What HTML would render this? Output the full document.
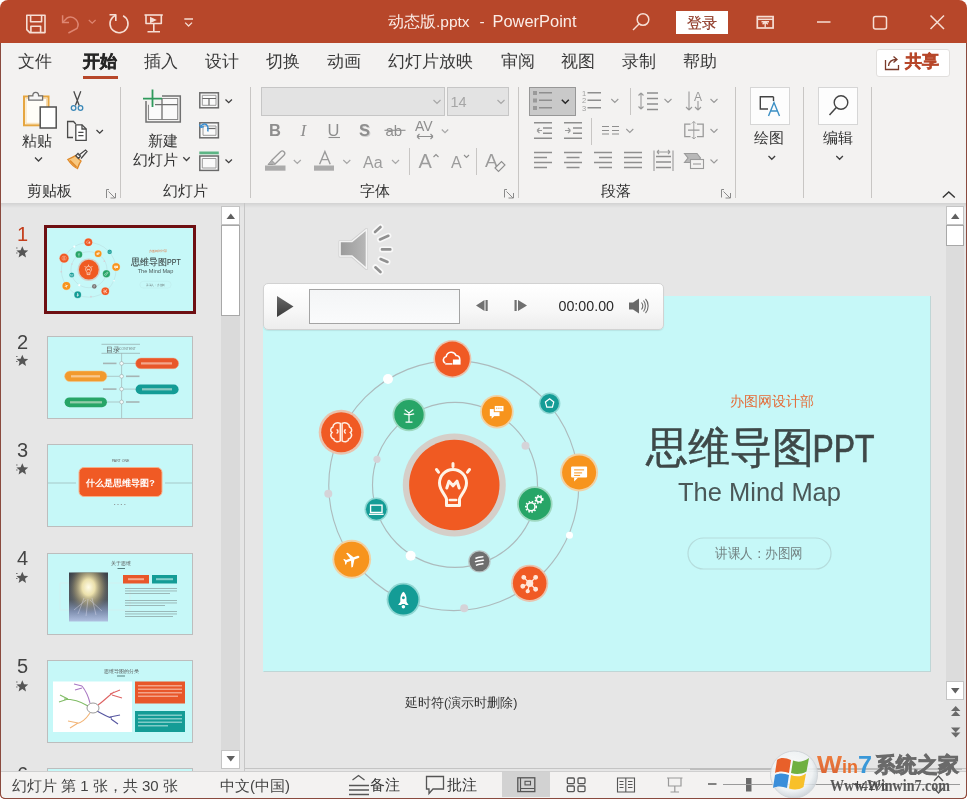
<!DOCTYPE html>
<html><head><meta charset="utf-8">
<style>
*{margin:0;padding:0;box-sizing:border-box}
html,body{width:967px;height:799px;overflow:hidden;background:#fff}
body{font-family:"Liberation Sans",sans-serif;position:relative;color:#262626}
.a{position:absolute}
.t{position:absolute;white-space:nowrap;line-height:1;will-change:transform}
svg{position:absolute;overflow:visible;will-change:transform}
</style></head><body>
<!-- window frame -->
<div class="a" id="win" style="left:0;top:0;width:967px;height:799px;background:#B7472A;border-radius:8px 8px 5px 5px"></div>
<!-- title bar region is the frame bg -->
<!-- tabs + ribbon -->
<div class="a" style="left:1px;top:43px;width:965px;height:160px;background:#F3F2F1"></div>
<!-- ribbon shadow -->
<div class="a" style="left:1px;top:203px;width:965px;height:5px;background:linear-gradient(#D2D2D2,#E6E6E6)"></div>
<!-- main body -->
<div class="a" style="left:1px;top:208px;width:965px;height:563px;background:#E6E6E6"></div>
<!-- status bar -->



<!-- TITLE BAR -->
<svg style="left:0;top:0" width="967" height="43">
 <g fill="none" stroke="#F6DED4" stroke-width="1.6" stroke-linejoin="round">
  <!-- save -->
  <path d="M26.8 15.2 H45 V32.6 H29.8 L26.8 29.6 Z"/>
  <path d="M30.6 15.2 V21.8 H41.6 V15.2"/>
  <path d="M30.9 32.6 V26.3 H40.6 V32.6"/>
  <!-- redo circle -->
  <path d="M123.1 15.7 A9 9 0 1 1 112.6 17.4 L115.8 14.8"/>
  <path d="M109.5 14.8 H115.8 V21"/>
  <!-- present -->
  <path d="M144.5 15 H162.8"/>
  <path d="M146 15 V23.5 H161.3 V15"/>
  <path d="M153.8 23.5 V31.6 M147.5 31.8 H160"/>
  <!-- customize -->
  <path d="M184.3 19 H193 M185.2 22.6 L188.6 26 L192 22.6" stroke-width="1.3"/>
 </g>
 <path d="M150 16.8 L156.8 20 L150 23.2 Z" fill="#F6DED4"/>
 <g fill="none" stroke="#DE8672" stroke-width="1.5">
  <!-- undo (disabled) -->
  <path d="M62.6 15.2 V22.5 H69"/>
  <path d="M62.6 22.5 L67 18 A7.6 7.6 0 0 1 77 28.5 L68.4 33"/>
  <path d="M88.8 20 L92.2 23.2 L95.6 20" stroke-width="1.2"/>
 </g>
 <text x="388" y="26.5" font-family="Liberation Sans" font-size="15.5" fill="#FBEDE7">动态版.pptx</text><text x="479.5" y="26.5" font-family="Liberation Sans" font-size="15.5" fill="#FBEDE7">-</text><text x="492.5" y="26.5" font-family="Liberation Sans" font-size="16" textLength="84" lengthAdjust="spacingAndGlyphs" fill="#FBEDE7">PowerPoint</text>
 <!-- search -->
 <g fill="none" stroke="#F6DED4" stroke-width="1.5">
  <circle cx="643" cy="19.5" r="5.8"/>
  <path d="M639 24 L633 30"/>
 </g>
 <rect x="676" y="11" width="52" height="23" fill="#FFFFFF"/>
 <text x="686.5" y="27.5" font-size="15" fill="#8E3826" stroke="#8E3826" stroke-width="0.2" font-family="Liberation Sans">登录</text>
 <!-- ribbon display options -->
 <g fill="none" stroke="#F6DED4" stroke-width="1.5">
  <rect x="757.3" y="16.6" width="15.8" height="11.4" stroke-width="1.7"/>
  <path d="M757.5 19.3 H773" stroke-width="1.5"/>
  <path d="M765.2 27.5 V21.8 M761.5 21.8 H769 M762.6 24.2 L765.2 21.8 L767.8 24.2" stroke-width="1.4"/>
  <!-- min -->
  <path d="M817 22 H830.5"/>
  <!-- max -->
  <rect x="873.5" y="16.5" width="13" height="12.5" rx="2"/>
  <!-- close -->
  <path d="M930.5 15.5 L944 29 M944 15.5 L930.5 29"/>
 </g>
</svg>
<!-- TABS -->
<div class="t" style="left:18px;top:53px;font-size:17px;color:#3A3A3A">文件</div>
<div class="t" style="left:83px;top:53px;font-size:17px;color:#262626;font-weight:bold;-webkit-text-stroke:0.5px #262626">开始</div>
<div class="a" style="left:83px;top:76px;width:35px;height:3px;background:#B7472A"></div>
<div class="t" style="left:144px;top:53px;font-size:17px;color:#3A3A3A">插入</div>
<div class="t" style="left:205px;top:53px;font-size:17px;color:#3A3A3A">设计</div>
<div class="t" style="left:266px;top:53px;font-size:17px;color:#3A3A3A">切换</div>
<div class="t" style="left:327px;top:53px;font-size:17px;color:#3A3A3A">动画</div>
<div class="t" style="left:388px;top:53px;font-size:17px;color:#3A3A3A">幻灯片放映</div>
<div class="t" style="left:501px;top:53px;font-size:17px;color:#3A3A3A">审阅</div>
<div class="t" style="left:561px;top:53px;font-size:17px;color:#3A3A3A">视图</div>
<div class="t" style="left:622px;top:53px;font-size:17px;color:#3A3A3A">录制</div>
<div class="t" style="left:683px;top:53px;font-size:17px;color:#3A3A3A">帮助</div>
<!-- share -->
<div class="a" style="left:876px;top:49px;width:74px;height:28px;background:#FFFFFF;border:1px solid #E1DFDD;border-radius:3px"></div>
<svg style="left:0;top:0" width="967" height="100">
 <g fill="none" stroke="#7A3A2A" stroke-width="1.3">
  <path d="M885.5 60 V69.5 H898.5 V65"/>
  <path d="M888.5 66 C889 61 892 59.5 896.5 59.5 M893.5 56.5 L897 59.5 L893.5 62.5"/>
 </g>
</svg>
<div class="t" style="left:905px;top:53px;font-size:17px;color:#B7472A;font-weight:bold;-webkit-text-stroke:0.5px #B7472A">共享</div>

<!-- RIBBON -->
<svg style="left:0;top:0" width="967" height="205">
 <!-- group separators -->
 <g stroke="#C8C6C4" stroke-width="1">
  <path d="M120.5 87 V198 M250.5 87 V198 M518.5 87 V198 M735.5 87 V198 M803.5 87 V198 M871.5 87 V198"/>
  <path d="M409.5 148 V175 M476.5 148 V175 M630.5 88 V115 M591.5 118 V145"/>
 </g>
 <!-- PASTE -->
 <rect x="24" y="96.5" width="24.5" height="28.8" fill="#FFFDF8" stroke="#E6A640" stroke-width="2"/>
 <rect x="26" y="98.5" width="20.5" height="24.8" fill="none" stroke="#F8DDB0" stroke-width="1"/>
 <path d="M28.7 95.8 H32.8 C32.8 93.6 34 92.3 35.7 92.3 C37.4 92.3 38.6 93.6 38.6 95.8 H42.6 V100.2 H28.7 Z" fill="#F6F6F6" stroke="#707070" stroke-width="1.3"/>
 <rect x="40.2" y="107" width="16" height="21" fill="#FFFFFF" stroke="#505050" stroke-width="1.5"/>
 <!-- scissors -->
 <g fill="none" stroke-width="1.3">
  <path d="M73.8 91.2 L79.2 105.5 M80.8 91.2 L75.4 105.5" stroke="#4A4A4A"/>
  <circle cx="73.6" cy="108" r="2.3" stroke="#3B88B8"/>
  <circle cx="80.5" cy="108" r="2.3" stroke="#3B88B8"/>
 </g>
 <!-- copy -->
 <g fill="none" stroke="#4A4A4A" stroke-width="1.3">
  <path d="M73 137.5 H67.6 V121.5 H73.5 L75.8 124"/>
  <path d="M75.8 124.8 H82 L86.2 129 V140.3 H75.8 Z" fill="#FFFFFF"/>
  <path d="M82 124.8 V129 H86.2"/>
  <path d="M78.3 132.3 H83.5 M78.3 135.6 H83.5"/>
  <path d="M96.5 130 L99.7 133.2 L102.9 130" stroke="#404040"/>
 </g>
 <!-- format painter -->
 <path d="M67.8 159.5 C71 158 73.5 157 75.5 155.5 L81 161 C79.5 163 78.5 165.5 77.5 168.5 C74 167 70.5 163.5 67.8 159.5 Z" fill="#F8C880" stroke="#E08A2A" stroke-width="1.3"/>
 <path d="M70 160.5 L76.5 167" stroke="#E08A2A" stroke-width="1.6"/>
 <path d="M75.8 155.8 L78 153.5 L80.5 156 L78.5 158.5 Z M78.5 155.5 L85.5 150 L87 151.5 L81 158.5" fill="#FFFFFF" stroke="#4A4A4A" stroke-width="1.3"/>
 <!-- paste chevron -->
 <path d="M35 157.5 L38.5 161 L42 157.5" fill="none" stroke="#404040" stroke-width="1.3"/>
 <!-- launchers -->
 <g fill="none" stroke="#8A8A8A" stroke-width="1">
  <path d="M106.5 198 V189.5 H109 M108.5 191.5 L115 198 M110.5 198 H115.5 V193"/>
  <path d="M504.5 197.5 V189.5 H507 M506.5 191.5 L513 198 M508.5 198 H513.5 V193"/>
  <path d="M721.5 197.5 V189.5 H724 M723.5 191.5 L730 198 M725.5 198 H730.5 V193"/>
 </g>
 <!-- NEW SLIDE -->
 <path d="M148.5 104.7 V119.5 H177.7 V98.5 H162 V104.7 Z" fill="#FAFAFA"/>
 <g fill="none" stroke="#707070" stroke-width="1.5">
  <path d="M146 101 V122 H180.3 V96 H162"/>
  <path d="M148.5 104.7 V119.5 H177.7 V98.5 H162" stroke="#8A8A8A" stroke-width="1.1"/>
  <path d="M162 98.5 V119.5 M155 104.7 H177.7" stroke-width="1.3"/>
 </g>
 <path d="M143 98.7 H162 M152.5 89.5 V107" stroke="#2F9A5C" stroke-width="1.8" fill="none"/>
 <!-- layout -->
 <g fill="none" stroke="#6A6A6A" stroke-width="1.5">
  <rect x="199.8" y="92.8" width="18.6" height="15" fill="#FAFAFA"/>
  <path d="M202.3 95.3 H216 V105.3 H202.3 Z" stroke="#9A9A9A" stroke-width="1"/>
  <path d="M202.3 98.5 H216 M209 98.5 V105.3" stroke-width="1.2"/>
  <path d="M225.5 99.5 L228.7 102.7 L231.9 99.5" stroke="#404040" stroke-width="1.3"/>
  <!-- reset -->
  <rect x="199.8" y="122.8" width="18.6" height="15" fill="#FAFAFA"/>
  <path d="M203 126 H216 V135.3 H203 Z" stroke="#9A9A9A" stroke-width="1"/>
  <path d="M207 128.5 H215.5" stroke-width="1.2"/>
  <!-- section -->
  <rect x="199.8" y="156" width="18.6" height="14.4" fill="#FAFAFA"/>
  <path d="M202.3 158.5 H216 V168 H202.3 Z" stroke="#9A9A9A" stroke-width="1"/>
  <path d="M225.5 159.5 L228.7 162.7 L231.9 159.5" stroke="#404040" stroke-width="1.3"/>
  <path d="M183.3 157.3 L186.5 160.5 L189.7 157.3" stroke="#404040" stroke-width="1.3"/>
 </g>
 <rect x="199.3" y="151.5" width="19.5" height="2.8" fill="#5DB585"/>
 <path d="M200.8 126.8 C202 123.5 206 123 207.5 126 C208.3 127.5 208.3 129.5 207.8 131.5" fill="none" stroke="#3A8ED0" stroke-width="1.5"/>
 <path d="M199.5 124.5 L200.8 127.5 L203.8 126.5" fill="none" stroke="#3A8ED0" stroke-width="1.4"/>
 <!-- FONT GROUP -->
 <rect x="261.5" y="87.5" width="183" height="28" fill="#E3E3E3" stroke="#C6C6C6"/>
 <rect x="447.5" y="87.5" width="61" height="28" fill="#E3E3E3" stroke="#C6C6C6"/>
 <g fill="none" stroke="#A8A8A8" stroke-width="1.2">
  <path d="M433.5 100 L437 103.5 L440.5 100 M497.5 100 L501 103.5 L504.5 100"/>
  <path d="M441.8 129.5 L445 132.7 L448.2 129.5"/>
  <path d="M293.8 160 L297.3 163.5 L300.8 160 M343.3 160 L346.8 163.5 L350.3 160 M392 160 L395.5 163.5 L399 160"/>
 </g>
 <text x="450.5" y="107" font-size="14.5" fill="#A6A6A6" font-family="Liberation Sans">14</text>
 <g font-family="Liberation Sans" fill="#8E8E8E">
  <text x="269" y="135.8" font-size="16.5" font-weight="bold">B</text>
  <text x="300.5" y="135.8" font-size="17" font-style="italic" font-family="Liberation Serif">I</text>
  <text x="327.5" y="135.8" font-size="16.5">U</text>
  <text x="360" y="136.8" font-size="16.5" font-weight="bold" fill="#D0D0D0">S</text>
  <text x="359" y="135.8" font-size="16.5" font-weight="bold" fill="#8E8E8E">S</text>
  <text x="385.5" y="135.5" font-size="15">ab</text>
  <text x="415" y="131" font-size="14">AV</text>
  <text x="363" y="167.5" font-size="16" fill="#9C9C9C">Aa</text>
  <text x="418.5" y="167.5" font-size="20" fill="#9C9C9C">A</text>
  <text x="451" y="167.5" font-size="16" fill="#9C9C9C">A</text>
  <text x="485" y="167" font-size="19" fill="#9C9C9C">A</text>
 </g>
 <g fill="none" stroke="#8E8E8E" stroke-width="1.1">
  <path d="M328.5 137.5 H340"/>
  <path d="M384.5 130.3 H405.5"/>
  <path d="M417 136.5 H433 M417 136.5 L419.5 134 M417 136.5 L419.5 139 M433 136.5 L430.5 134 M433 136.5 L430.5 139"/>
  <path d="M433.5 157 L436 154.5 L438.5 157"/>
  <path d="M464 155 L466.5 157.5 L469 155"/>
  <path d="M495 168 L501.5 161.5 L505 165 L498.5 171.5 Z" fill="#F3F2F1"/>
 </g>
 <!-- highlighter -->
 <path d="M271.5 160.5 L280.5 151.8 C281.5 150.8 283 150.8 284 151.8 C285 152.8 285 154.3 284 155.3 L275 164 Z" fill="none" stroke="#9A9A9A" stroke-width="1.3"/><path d="M271.5 160.5 L268 164.5 H273.5 L275 164" fill="#B0B0B0" stroke="#9A9A9A" stroke-width="1"/>
 <rect x="265" y="165.5" width="20.5" height="5.2" fill="#ABABAB"/>
 <path d="M319.6 164.2 L324.9 151.5 L330.2 164.2 M321.6 159.6 H328.2" fill="none" stroke="#9A9A9A" stroke-width="1.4"/>
 <rect x="314" y="165.5" width="20" height="5.2" fill="#ABABAB"/>
 <!-- PARAGRAPH -->
 <rect x="529.5" y="87.5" width="46" height="28" fill="#C9C9C9" stroke="#979797"/>
 <g fill="#9A9A9A">
  <rect x="533" y="91" width="4" height="4"/><rect x="533" y="98.5" width="4" height="4"/><rect x="533" y="106" width="4" height="4"/>
 </g>
 <g fill="none" stroke="#8E8E8E" stroke-width="1.5">
  <path d="M539 92.8 H552 M539 100.3 H552 M539 107.8 H552"/>
  <path d="M587.5 92.8 H601 M587.5 100.3 H601 M587.5 107.8 H601"/>
  <path d="M647 93 H658 M647 98.5 H658 M647 104 H658 M647 109.5 H658"/>
  <!-- indents -->
  <path d="M534 122.8 H552 M543 128 H552 M543 133.2 H552 M534 138.3 H552"/>
  <path d="M564 122.8 H582 M573 128 H582 M573 133.2 H582 M564 138.3 H582"/>
  <!-- align -->
  <path d="M534 152.5 H552 M534 157.5 H547 M534 162.5 H552 M534 167.5 H547"/>
  <path d="M564 152.5 H582 M566.5 157.5 H579.5 M564 162.5 H582 M566.5 167.5 H579.5"/>
  <path d="M594 152.5 H612 M599 157.5 H612 M594 162.5 H612 M599 167.5 H612"/>
  <path d="M624 152.5 H642 M624 157.5 H642 M624 162.5 H642 M624 167.5 H642"/>
  <path d="M656 156.5 H671 M656 162 H671 M656 167.5 H671"/>
  <path d="M602 126.5 H609 M612 126.5 H619 M602 130.5 H609 M612 130.5 H619 M602 134 H609 M612 134 H619" stroke-width="1.2"/>
 </g>
 <g fill="none" stroke="#9A9A9A" stroke-width="1.1">
  <path d="M537 130.5 H542 M537 130.5 L539.5 128 M537 130.5 L539.5 133"/>
  <path d="M565 130.5 H570.5 M570.5 130.5 L568 128 M570.5 130.5 L568 133"/>
  <path d="M641 93 V109 M641 93 L638.5 95.5 M641 93 L643.5 95.5 M641 109 L638.5 106.5 M641 109 L643.5 106.5"/>
  <path d="M654 150.5 V171 M673 150.5 V171 M657 152 H670 M657 152 L659 150 M657 152 L659 154 M670 152 L668 150 M670 152 L668 154"/>
  <path d="M689 91.5 V110 M689 110 L686 107 M689 110 L692 107 M698 101 V110 M698 110 L695 107 M698 110 L701 107"/>
  <path d="M690.5 124.2 H684.8 V136.6 H690.5 M697 124.2 H703.2 V136.6 H697 M688 130.2 H699.5" stroke-width="1.3"/><path d="M693.8 121.5 V139 M691.8 123.5 L693.8 121.5 L695.8 123.5 M691.8 137 L693.8 139 L695.8 137" stroke-width="0.9"/>
  <path d="M684.5 153.5 H697 L700.5 158 L697 162.5 H684.5 L688 158 Z" fill="#B8B8B8"/>
  <rect x="690.5" y="159.5" width="13" height="9" fill="#F3F2F1"/>
  <path d="M693 164 H701"/>
  <path d="M611.3 99 L614.8 102.5 L618.3 99 M664.5 99 L668 102.5 L671.5 99 M710.5 99 L714 102.5 L717.5 99"/>
  <path d="M626.3 129 L629.8 132.5 L633.3 129 M710.5 129 L714 132.5 L717.5 129 M710.5 159.5 L714 163 L717.5 159.5"/>
 </g>
 <text x="694" y="101" font-size="12" fill="#9A9A9A" font-family="Liberation Sans">A</text>
 <g font-family="Liberation Sans" font-size="7.5" fill="#A0A0A0">
  <text x="582" y="95.5">1</text><text x="582" y="103">2</text><text x="582" y="110.5">3</text>
 </g>
 <path d="M561.8 99.8 L565.3 103.3 L568.8 99.8" fill="none" stroke="#262626" stroke-width="1.5"/>
 <!-- DRAWING / EDITING -->
 <rect x="750.5" y="87.5" width="39" height="37" fill="#FDFDFD" stroke="#D6D6D6"/>
 <rect x="818.5" y="87.5" width="39" height="37" fill="#FDFDFD" stroke="#D6D6D6"/>
 <path d="M773.5 96.8 H760.3 V109 H768" fill="none" stroke="#444" stroke-width="1.4"/>
 <path d="M773.5 96.8 V101" fill="none" stroke="#444" stroke-width="1.4"/>
 <path d="M768.5 116 L774 102.5 L779.5 116 M770.5 111 H777.5" fill="none" stroke="#3B8FC4" stroke-width="1.4"/>
 <circle cx="841" cy="102.5" r="6.8" fill="none" stroke="#444" stroke-width="1.4"/>
 <path d="M836.3 107.5 L829.5 115" stroke="#444" stroke-width="1.5"/>
 <path d="M768.5 156 L771.8 159.3 L775.1 156 M836.3 156 L839.6 159.3 L842.9 156" fill="none" stroke="#404040" stroke-width="1.3"/>
 <path d="M942.8 197.5 L948.8 192 L954.8 197.5" fill="none" stroke="#333" stroke-width="1.4"/>
</svg>
<div class="t" style="left:22px;top:133px;font-size:15px;color:#333">粘贴</div>
<div class="t" style="left:27px;top:184px;font-size:14.5px;color:#333">剪贴板</div>
<div class="t" style="left:148px;top:133px;font-size:15px;color:#333">新建</div>
<div class="t" style="left:133px;top:152px;font-size:15px;color:#333">幻灯片</div>
<div class="t" style="left:163px;top:184px;font-size:14.5px;color:#333">幻灯片</div>
<div class="t" style="left:360px;top:184px;font-size:14.5px;color:#333">字体</div>
<div class="t" style="left:601px;top:184px;font-size:14.5px;color:#333">段落</div>
<div class="t" style="left:754px;top:130px;font-size:15px;color:#333">绘图</div>
<div class="t" style="left:823px;top:130px;font-size:15px;color:#333">编辑</div>

<!-- SLIDE PANEL -->
<svg width="0" height="0" style="position:absolute">
 <defs>
  <symbol id="s1" viewBox="0 0 668 376">
   <rect width="668" height="376" fill="#C6F8F8"/>
   <circle cx="190.75" cy="189.6" r="125" fill="none" stroke="#ADBBBD" stroke-width="1.15"/>
<circle cx="192" cy="188.9" r="82.5" fill="none" stroke="#ADBBBD" stroke-width="1.15"/>
<circle cx="125" cy="83" r="5" fill="#FFFFFF"/>
<circle cx="114" cy="163.3" r="3.6" fill="#D5D3D8"/>
<circle cx="65.3" cy="197.8" r="4" fill="#D5D3D8"/>
<circle cx="262.5" cy="149.8" r="4" fill="#D5D3D8"/>
<circle cx="147.7" cy="259.7" r="5" fill="#FFFFFF"/>
<circle cx="306.5" cy="239.3" r="3.5" fill="#FFFFFF"/>
<circle cx="201.2" cy="312.3" r="4" fill="#D5D3D8"/>
<circle cx="191.3" cy="189" r="51.5" fill="#D5CFC9"/><circle cx="191.3" cy="189" r="45.2" fill="#F05A22"/>
<g transform="translate(190,187)" fill="none" stroke="#FFF3E6" stroke-width="3" stroke-linecap="round" stroke-linejoin="round">
<path d="M-6.5 22.5 V16.5 C-6.5 12.5 -13.5 8 -13.5 0 A13.5 13.5 0 0 1 13.5 0 C13.5 8 6.5 12.5 6.5 16.5 V22.5 Z"/>
<path d="M-3.2 17 H3.2" stroke-width="2.6"/>
<path d="M0 -19.5 V-16.5 M-16.5 -13.5 L-14.5 -10.8 M16.5 -13.5 L14.5 -10.8"/>
<path d="M-6.2 5 L-4 -1.8 L0 2.8 L4 -1.8 L6.2 5" stroke-width="3"/>
</g>
<circle cx="189.4" cy="63" r="19" fill="#E9C3AE"/><circle cx="189.4" cy="63" r="17.4" fill="#F05A24"/>
<g transform="translate(189.4,63) scale(1.024)"><path d="M-7 4 A3.5 3.5 0 0 1 -6 -2.5 A5 5 0 0 1 3.5 -3.5 A3.5 3.5 0 0 1 7 1" fill="none" stroke="#FFF" stroke-width="1.5"/><rect x="0.5" y="0.5" width="7.5" height="5" fill="#FFF"/><path d="M-7 4.8 H0" stroke="#FFF" stroke-width="1.5"/></g>
<circle cx="78.2" cy="136.3" r="22.5" fill="#E9C3AE"/><circle cx="78.2" cy="136.3" r="20" fill="#F05A24"/>
<g transform="translate(78.2,136.5) scale(0.92)"><g fill="none" stroke="#FFEFE4" stroke-width="1.6"><path d="M-1 -10 C-5 -12 -9 -9 -9 -6 C-12 -5 -12 -1 -10 0 C-13 3 -10 7 -8 7 C-8 10 -4 11 -1 9 Z"/><path d="M1 -10 C5 -12 9 -9 9 -6 C12 -5 12 -1 10 0 C13 3 10 7 8 7 C8 10 4 11 1 9 Z"/><path d="M-5 -3 C-3 -3 -3 0 -5 1 M5 -3 C3 -3 3 0 5 1"/></g></g>
<circle cx="146" cy="118.8" r="16.5" fill="#9ED8C0"/><circle cx="146" cy="118.8" r="14.7" fill="#27A567"/>
<g transform="translate(146,118.8) scale(0.865)"><g fill="none" stroke="#FFF" stroke-width="1.4"><path d="M0 8 V-2 M-4 8.5 H4 M0 -2 L-5 -6 M0 -2 L5 -6 M0 0 L-6 -1 M0 0 L6 -1"/></g></g>
<circle cx="233.9" cy="115.7" r="16.8" fill="#F0D2A6"/><circle cx="233.9" cy="115.7" r="15" fill="#F7941D"/>
<g transform="translate(233.9,115.7) scale(0.882)"><rect x="-8" y="-3" width="11" height="8" fill="#FFF"/><path d="M-6 5 L-6 8 L-3 5" fill="#FFF"/><rect x="-3" y="-7" width="11" height="7" fill="#FFF" stroke="#F7941D" stroke-width="1"/><path d="M-1 -4 H6" stroke="#F7941D" stroke-width="1" stroke-dasharray="1.5 1"/></g>
<circle cx="286.6" cy="107.4" r="10.8" fill="#8FD6D2"/><circle cx="286.6" cy="107.4" r="9.3" fill="#149C96"/>
<g transform="translate(286.6,107.4) scale(0.93)"><path d="M0 -5 L4.5 -1.5 L3 4 H-3 L-4.5 -1.5 Z" fill="none" stroke="#FFF" stroke-width="1.3"/></g>
<circle cx="316.1" cy="176.4" r="19" fill="#F0D2A6"/><circle cx="316.1" cy="176.4" r="17" fill="#F7941D"/>
<g transform="translate(316.1,176.4) scale(1.0)"><rect x="-8" y="-6" width="16" height="11" fill="#FFF" rx="1"/><path d="M-5 5 V9 L-1 5" fill="#FFF"/><path d="M-5 -2.5 H5 M-5 0.5 H3 M-5 3 H1" stroke="#F7941D" stroke-width="1"/></g>
<circle cx="271.8" cy="208" r="17.8" fill="#9ED8C0"/><circle cx="271.8" cy="208" r="16" fill="#27A567"/>
<g transform="translate(271.8,208) scale(0.941)"><g fill="none" stroke="#FFF" stroke-width="1.6"><circle cx="-4" cy="3" r="4.2"/><circle cx="4.5" cy="-5" r="2.8"/></g><g stroke="#FFF" stroke-width="1.6" stroke-dasharray="1.6 1.7"><circle cx="-4" cy="3" r="5.6" fill="none"/><circle cx="4.5" cy="-5" r="4" fill="none"/></g></g>
<circle cx="113.3" cy="213.3" r="11.8" fill="#8FD6D2"/><circle cx="113.3" cy="213.3" r="10.4" fill="#149C96"/>
<g transform="translate(113.3,213.3) scale(1.04)"><rect x="-5.5" y="-4" width="11" height="7" fill="none" stroke="#FFF" stroke-width="1.3"/><path d="M-7 4.8 H7" stroke="#FFF" stroke-width="1.3"/></g>
<circle cx="216.4" cy="265.4" r="11.2" fill="#B8C4C4"/><circle cx="216.4" cy="265.4" r="9.9" fill="#6E6E6E"/>
<g transform="translate(216.4,265.4) scale(0.99)"><g fill="none" stroke="#FFF" stroke-width="1.6"><path d="M-4 -3 C0 -5 3 -4 4 -5 M-4.5 0.5 C0 -1.5 3 -0.5 4.5 -1.5 M-3.5 4 C0 2 3 3 4 2"/></g></g>
<circle cx="88.75" cy="263.25" r="19.4" fill="#F0D2A6"/><circle cx="88.75" cy="263.25" r="17.5" fill="#F7941D"/>
<g transform="translate(88.75,263.25) scale(1.029)"><path transform="rotate(70) scale(0.78) translate(-11.5,-12)" d="M21 16v-2l-8-5V3.5c0-.83-.67-1.5-1.5-1.5S10 2.67 10 3.5V9l-8 5v2l8-2.5V19l-2 1.5V22l3.5-1 3.5 1v-1.5L13 19v-5.5l8 2.5z" fill="#FFF"/></g>
<circle cx="140.4" cy="303.6" r="16.8" fill="#8FD6D2"/><circle cx="140.4" cy="303.6" r="15" fill="#149C96"/>
<g transform="translate(140.4,303.6) scale(0.882)"><path d="M0 -9 C4 -6 4 0 3 5 H-3 C-4 0 -4 -6 0 -9 Z" fill="#FFF"/><path d="M-3 2 L-6 6 H-2 M3 2 L6 6 H2" fill="#FFF"/><circle cx="0" cy="-2" r="1.7" fill="#149C96"/><circle cx="0" cy="8" r="2" fill="#FFF"/></g>
<circle cx="266.7" cy="287.3" r="18.6" fill="#E9C3AE"/><circle cx="266.7" cy="287.3" r="16.8" fill="#F05A24"/>
<g transform="translate(266.7,287.3) scale(0.988)"><g stroke="#FFE6D9" stroke-width="1.3" fill="#FFE6D9"><path d="M0 0 L-6 -6 M0 0 L6 -6 M0 0 L-7 3 M0 0 L6 6 M0 0 L-2 8"/><circle r="3"/><circle cx="-6" cy="-6" r="1.8"/><circle cx="6" cy="-6" r="1.8"/><circle cx="-7" cy="3" r="1.8"/><circle cx="6" cy="6" r="1.8"/><circle cx="-2" cy="8" r="1.5"/></g></g>
   <text x="508.5" y="110" text-anchor="middle" font-size="14" fill="#E46C38" font-family="Liberation Sans">办图网设计部</text>
   <text x="382.5" y="166" font-size="41.5" fill="#3E4848" stroke="#3E4848" stroke-width="0.5" font-family="Liberation Sans">思维导图</text><text x="549.5" y="165.5" font-size="38" fill="#3E4848" stroke="#3E4848" stroke-width="0.7" font-family="Liberation Sans" textLength="62" lengthAdjust="spacingAndGlyphs">PPT</text>
   <text x="415" y="205.4" font-size="25.5" fill="#4A5858" font-family="Liberation Sans" textLength="163" lengthAdjust="spacingAndGlyphs">The Mind Map</text>
   <rect x="425" y="242" width="143" height="31" rx="15.5" fill="none" stroke="#B5DCDC" stroke-width="1.2"/>
   <text x="452" y="262" font-size="14" fill="#738383" font-family="Liberation Sans" textLength="88" lengthAdjust="spacingAndGlyphs">讲课人：办图网</text>
  </symbol>
 </defs>
</svg>
<div class="a" style="left:244px;top:203px;width:1px;height:568px;background:#C6C6C6"></div>
<!-- slide scrollbar -->
<div class="a" style="left:221px;top:206px;width:19px;height:562px;background:#DADADA"></div>
<div class="a" style="left:221px;top:206px;width:19px;height:19px;background:#FFF;border:1px solid #C4C4C4"></div>
<div class="a" style="left:221px;top:225px;width:19px;height:91px;background:#FFF;border:1px solid #A8A8A8"></div>
<div class="a" style="left:221px;top:750px;width:19px;height:19px;background:#FFF;border:1px solid #C4C4C4"></div>
<svg style="left:0;top:0" width="250" height="780"><path d="M226.5 219 L230.8 213.5 L235 219 Z" fill="#606060"/><path d="M226.5 756 L230.8 761.5 L235 756 Z" fill="#606060"/></svg>
<!-- numbers -->
<div class="t" style="left:17px;top:224px;font-size:20px;color:#C43E1C">1</div>
<div class="t" style="left:17px;top:332px;font-size:20px;color:#444">2</div>
<div class="t" style="left:17px;top:440px;font-size:20px;color:#444">3</div>
<div class="t" style="left:17px;top:548px;font-size:20px;color:#444">4</div>
<div class="t" style="left:17px;top:656px;font-size:20px;color:#444">5</div>
<div class="t" style="left:17px;top:764px;font-size:20px;color:#444">6</div>
<svg style="left:0;top:0" width="40" height="780">
 <g fill="#555">
  <g id="star"><path d="M22.3 246.2 L24 250.2 L28.2 250.5 L25 253.2 L26 257.4 L22.3 255.1 L18.6 257.4 L19.6 253.2 L16.4 250.5 L20.6 250.2 Z"/><rect x="16" y="247.5" width="1.6" height="1" fill="#777"/><rect x="16" y="252.5" width="1.6" height="1" fill="#777"/></g>
  <use href="#star" y="108.5"/><use href="#star" y="217"/><use href="#star" y="325.5"/><use href="#star" y="434"/>
 </g>
</svg>
<!-- thumbs -->
<div class="a" style="left:44px;top:225px;width:152px;height:89px;border:3px solid #6E0F12;background:#C6F8F8"></div>
<svg style="left:47px;top:228px" width="146" height="83"><use href="#s1" width="146" height="83"/></svg>

<!-- thumb 2 -->
<div class="a" style="left:47px;top:336px;width:146px;height:83px;background:#C6F8F8;border:1px solid #BDBDBD;overflow:hidden">
 <svg style="left:0;top:0" width="146" height="83">
  <path d="M53.5 7.3 H92 M53.5 16.3 H92" stroke="#8A9A9A" stroke-width="0.6"/>
  <text x="58" y="14.5" font-size="6.5" fill="#555" font-family="Liberation Sans">目录</text>
  <text x="71" y="12.5" font-size="3.5" fill="#7A8A8A" font-family="Liberation Sans">CONTENT</text>
  <path d="M73.6 16.3 V83" stroke="#9AA8A8" stroke-width="0.6"/>
  <path d="M75.5 26.4 H88 M59 39.3 H71.7 M75.5 52.1 H88 M59 65 H71.7" stroke="#9AA8A8" stroke-width="0.6"/>
  <g fill="#F4FCFC" stroke="#9AA8A8" stroke-width="0.6"><circle cx="73.6" cy="26.4" r="1.9"/><circle cx="73.6" cy="39.3" r="1.9"/><circle cx="73.6" cy="52.1" r="1.9"/><circle cx="73.6" cy="65" r="1.9"/></g>
  <rect x="87.6" y="21.1" width="43" height="10.6" rx="5.3" fill="#E8572A" stroke="#F2A27E" stroke-width="0.5"/>
  <rect x="16.6" y="34" width="42.3" height="10.6" rx="5.3" fill="#F29A2E" stroke="#F6C48A" stroke-width="0.5"/>
  <rect x="87.6" y="47.6" width="43" height="9.6" rx="4.8" fill="#149C96"/>
  <rect x="16.6" y="60.4" width="42.3" height="9.8" rx="4.9" fill="#27A567"/>
  <g fill="#FFF4EC" opacity="0.5"><rect x="93" y="25.3" width="31" height="2.2"/><rect x="23" y="38.2" width="29" height="2.2"/><rect x="94" y="51.2" width="30" height="2.2"/><rect x="22" y="64.2" width="32" height="2.2"/></g>
  <g fill="#A6B4B4"><rect x="55" y="25.6" width="13.5" height="1.6"/><rect x="78" y="38.5" width="13.5" height="1.6"/><rect x="55" y="51.3" width="13.5" height="1.6"/><rect x="78" y="64.2" width="13.5" height="1.6"/></g>
 </svg>
</div>
<!-- thumb 3 -->
<div class="a" style="left:47px;top:444px;width:146px;height:83px;background:#C6F8F8;border:1px solid #BDBDBD;overflow:hidden">
 <svg style="left:0;top:0" width="146" height="83">
  <path d="M0 38 H28 M117 38 H146" stroke="#9AB4B4" stroke-width="0.7"/>
  <rect x="31" y="22.5" width="83" height="29" rx="5" fill="#F05A24" stroke="#F6B08A" stroke-width="1"/>
  <text x="72.5" y="41" text-anchor="middle" font-size="9" font-weight="bold" fill="#FFF" font-family="Liberation Sans">什么是思维导图?</text>
  <text x="72.5" y="17" text-anchor="middle" font-size="3.5" fill="#666" font-family="Liberation Sans">PART ONE</text>
  <path d="M66 59.5 H79" stroke="#888" stroke-width="0.8" stroke-dasharray="1.2 2.2"/>
 </svg>
</div>
<!-- thumb 4 -->
<div class="a" style="left:47px;top:553px;width:146px;height:82px;background:#C6F8F8;border:1px solid #BDBDBD;overflow:hidden">
 <svg style="left:0;top:0" width="146" height="82">
  <defs>
   <linearGradient id="ph" x1="0" y1="0" x2="0" y2="1"><stop offset="0" stop-color="#3A4048"/><stop offset="0.55" stop-color="#505860"/><stop offset="0.8" stop-color="#8090B0"/><stop offset="1" stop-color="#B0C0E0"/></linearGradient>
   <radialGradient id="glow" cx="0.5" cy="0.3" r="0.55"><stop offset="0" stop-color="#FFFCE8"/><stop offset="0.3" stop-color="#F4E8B0" stop-opacity="0.95"/><stop offset="0.65" stop-color="#B8A878" stop-opacity="0.5"/><stop offset="1" stop-color="#606060" stop-opacity="0"/></radialGradient>
  </defs>
  <rect x="12" y="29" width="70" height="27" fill="none" stroke="#D8ECEC" stroke-width="0.6"/>
  <rect x="21" y="18.5" width="39" height="49" fill="url(#ph)"/>
  <rect x="21" y="18.5" width="39" height="49" fill="url(#glow)"/>
  <path d="M36 44 L30 60 M40 45 L38 62 M44 44 L48 61 M38 46 L26 56 M42 46 L54 57" stroke="#DDE" stroke-width="0.7" opacity="0.6"/>
  <text x="73" y="10.5" text-anchor="middle" font-size="5" fill="#555" font-family="Liberation Sans">关于思维</text>
  <path d="M69.5 14.5 H77" stroke="#3B6060" stroke-width="0.8"/>
  <rect x="75" y="21" width="26" height="8.5" fill="#E8572A"/><rect x="104" y="21" width="25" height="8.5" fill="#149C96"/>
  <g fill="#FFE0D0" opacity="0.6"><rect x="80" y="24.2" width="16" height="2"/></g><g fill="#D0F0EE" opacity="0.6"><rect x="108" y="24.2" width="17" height="2"/></g>
  <g fill="#8AA0A0" opacity="0.8"><rect x="77" y="34" width="52" height="0.9"/><rect x="77" y="36.5" width="52" height="0.9"/><rect x="77" y="39" width="45" height="0.9"/>
  <rect x="77" y="46" width="52" height="0.9"/><rect x="77" y="48.5" width="52" height="0.9"/><rect x="77" y="51" width="40" height="0.9"/>
  <rect x="77" y="57" width="52" height="0.9"/><rect x="77" y="59.5" width="52" height="0.9"/><rect x="77" y="62" width="48" height="0.9"/></g>
 </svg>
</div>
<!-- thumb 5 -->
<div class="a" style="left:47px;top:660px;width:146px;height:83px;background:#C6F8F8;border:1px solid #BDBDBD;overflow:hidden">
 <svg style="left:0;top:0" width="146" height="83">
  <text x="73" y="12" text-anchor="middle" font-size="5" fill="#555" font-family="Liberation Sans">思维导图的分类</text>
  <path d="M69 15 H77" stroke="#3B6060" stroke-width="0.8"/>
  <rect x="5" y="20.5" width="79" height="50.5" fill="#FFFFFF"/>
  <g fill="none" stroke-width="1.1" opacity="0.85">
   <path d="M40 45 C32 40 25 38 16 38 M20 38 L12 34 M20 38 L11 41" stroke="#6AB04A"/>
   <path d="M42 42 C40 34 38 30 34 25 M34 25 L26 23 M34 27 L27 29" stroke="#9A60B8"/>
   <path d="M50 44 C56 40 60 35 66 31 M62 33 L72 29 M64 34 L74 37" stroke="#D84848"/>
   <path d="M49 50 C55 53 58 56 64 57 M62 56 L72 54 M63 58 L70 63" stroke="#3A3A90"/>
   <path d="M42 52 C38 58 34 62 28 63 M30 62 L20 60 M30 62 L22 67" stroke="#F0A860"/>
  </g>
  <ellipse cx="45" cy="47" rx="6" ry="5" fill="#FFF" stroke="#555" stroke-width="0.6"/>
  <rect x="87" y="20.5" width="50" height="22" fill="#E8572A"/>
  <rect x="87" y="50" width="50" height="21" fill="#149C96"/>
  <g fill="#FBD8C8" opacity="0.6"><rect x="90" y="24" width="44" height="1.5"/><rect x="90" y="27.5" width="44" height="1.5"/><rect x="90" y="31" width="44" height="1.5"/><rect x="90" y="34.5" width="40" height="1.5"/></g>
  <g fill="#C8ECEA" opacity="0.6"><rect x="90" y="53.5" width="44" height="1.5"/><rect x="90" y="57" width="44" height="1.5"/><rect x="90" y="60.5" width="44" height="1.5"/><rect x="90" y="64" width="30" height="1.5"/></g>
 </svg>
</div>
<!-- thumb 6 -->
<div class="a" style="left:47px;top:768px;width:146px;height:10px;background:#C6F8F8;border:1px solid #BDBDBD"></div>


<!-- MAIN AREA -->
<div class="a" style="left:946px;top:206px;width:18px;height:493px;background:#DCDCDC"></div>
<div class="a" style="left:946px;top:206px;width:18px;height:19px;background:#FFF;border:1px solid #C4C4C4"></div>
<div class="a" style="left:946px;top:225px;width:18px;height:21px;background:#FFF;border:1px solid #A8A8A8"></div>
<div class="a" style="left:946px;top:681px;width:18px;height:19px;background:#FFF;border:1px solid #C4C4C4"></div>
<svg style="left:0;top:0" width="967" height="780">
 <path d="M951 219 L955.3 213.5 L959.5 219 Z M951 688 L955.3 693.5 L959.5 688 Z" fill="#606060"/>
 <path d="M951 711 L955.7 706 L960.4 711 Z M951 716 L955.7 711 L960.4 716 Z M951 727.5 L955.7 732.5 L960.4 727.5 Z M951 732.5 L955.7 737.5 L960.4 732.5 Z" fill="#6A6A6A"/>
</svg>
<svg style="left:263px;top:296px" width="668" height="376"><use href="#s1" width="668" height="376"/></svg>
<div class="a" style="left:263px;top:296px;width:668px;height:376px;border:1px solid #BFD6D6;border-top:0;border-left-color:#C6F8F8"></div>
<div class="t" style="left:405px;top:697px;font-size:12.5px;color:#333">延时符(演示时删除)</div>
<div class="a" style="left:245px;top:768px;width:721px;height:1px;background:#C4C4C4"></div>

<!-- speaker icon -->
<svg style="left:0;top:0" width="967" height="340">
 <defs>
  <linearGradient id="spk" x1="0" y1="0" x2="1" y2="0"><stop offset="0" stop-color="#9A9A9A"/><stop offset="1" stop-color="#B8B8B8"/></linearGradient>
  <filter id="sh" x="-20%" y="-20%" width="140%" height="140%"><feGaussianBlur stdDeviation="0.6"/></filter>
 </defs>
 <path d="M340 241.5 H352 L366.5 229.5 V268.5 L352 256 H340 Z" fill="#D0D0D0" stroke="#D0D0D0" stroke-width="3" stroke-linejoin="round" filter="url(#sh)"/>
 <path d="M340 241.5 H352 L366.5 229.5 V268.5 L352 256 H340 Z" fill="url(#spk)" stroke="#F4F4F4" stroke-width="1.6" stroke-linejoin="round"/>
 <g stroke-linecap="round">
  <g stroke="#F8F8F8" stroke-width="6">
   <path d="M375 232 L380.5 227 M380 239.5 L388.4 235.8 M382 249.4 H390.3 M380.6 259 L387.5 262 M375.4 267.3 L380.5 272"/>
  </g>
  <g stroke="#909090" stroke-width="2.6">
   <path d="M375 232 L380.5 227 M380 239.5 L388.4 235.8 M382 249.4 H390.3 M380.6 259 L387.5 262 M375.4 267.3 L380.5 272"/>
  </g>
 </g>
</svg>
<!-- media bar -->
<div class="a" style="left:263px;top:283px;width:401px;height:47px;border:1px solid #D2D2D2;border-radius:5px;background:linear-gradient(#FFFFFF,#F7F7F7 60%,#EDEDED);box-shadow:0 1px 1px rgba(0,0,0,0.08)"></div>
<div class="a" style="left:309px;top:289px;width:151px;height:35px;border:1px solid #A4A4A4;background:linear-gradient(#F4F5F6,#FAFBFC)"></div>
<svg style="left:0;top:0" width="967" height="340">
 <defs><linearGradient id="pl" x1="0" y1="0" x2="0" y2="1"><stop offset="0" stop-color="#6A6A6A"/><stop offset="1" stop-color="#3A3A3A"/></linearGradient></defs>
 <path d="M277 296 L293.5 306.5 L277 317 Z" fill="url(#pl)"/>
 <path d="M476 305.5 L484.5 300 V311 Z" fill="#707070"/><rect x="485.5" y="300" width="2.2" height="11" fill="#707070"/>
 <rect x="514.5" y="300" width="2.2" height="11" fill="#707070"/><path d="M518 300 L527 305.5 L518 311 Z" fill="#707070"/>
 <text x="558.5" y="311.2" font-size="14.2" fill="#2A2A2A" font-family="Liberation Sans" textLength="55.5" lengthAdjust="spacingAndGlyphs">00:00.00</text>
 <path d="M629 302.5 H633 L639 298.5 V313.5 L633 309.5 H629 Z" fill="#6A6A6A"/>
 <path d="M641.5 302.5 C643 304.5 643 307.5 641.5 309.5 M643.5 300.5 C646 303.5 646 308.5 643.5 311.5 M645.5 299 C649 302.5 649 309.5 645.5 313" fill="none" stroke="#6A6A6A" stroke-width="1.1"/>
</svg>

<!-- STATUS BAR -->
<div class="a" style="left:1px;top:771px;width:965px;height:27px;background:#F3F2F1;border-top:1px solid #CFCFCF;border-radius:0 0 4px 4px"></div>
<div class="t" style="left:12px;top:778px;font-size:15px;color:#444">幻灯片 第 1 张，共 30 张</div>
<div class="t" style="left:220px;top:778px;font-size:15px;color:#444">中文(中国)</div>
<div class="a" style="left:502px;top:772px;width:48px;height:25px;background:#D2D2D2"></div>
<div class="t" style="left:370px;top:777px;font-size:15px;color:#333">备注</div>
<div class="t" style="left:447px;top:777px;font-size:15px;color:#333">批注</div>
<svg style="left:0;top:0" width="967" height="799">
 <g fill="none" stroke="#555" stroke-width="1.3">
  <!-- notes -->
  <path d="M352.5 780 L358.5 775.5 L364.5 780"/>
  <path d="M349 785.5 H369 M349 790 H369 M349 794.5 H369"/>
  <!-- comments -->
  <path d="M426.5 776.5 H443.5 V789 H433 L429 793.5 V789 H426.5 Z"/>
  <!-- normal view -->
  <rect x="517.8" y="777.8" width="17" height="13.8"/>
  <path d="M520.5 778 V791.5 M520.5 788.5 H534.5" stroke-width="1.2"/>
  <rect x="525" y="781.3" width="5.5" height="3.6" stroke-width="1.1"/>
  <!-- sorter -->
  <rect x="567.3" y="778" width="7" height="5.6" rx="1"/><rect x="578" y="778" width="7" height="5.6" rx="1"/>
  <rect x="567.3" y="786" width="7" height="5.6" rx="1"/><rect x="578" y="786" width="7" height="5.6" rx="1"/>
  <!-- reading -->
  <path d="M617.5 778 H625.8 V792 H617.5 Z M625.8 778 H634.5 V792 H625.8 Z M619.5 781.5 H623.5 M619.5 784.5 H623.5 M619.5 787.5 H623.5 M628 781.5 H632.5 M628 784.5 H632.5 M628 787.5 H632.5" stroke-width="1.1"/>
 </g>
 <g fill="none" stroke="#9A9A9A" stroke-width="1.2">
  <path d="M667 778 H682.5 M668.5 778 V786 H681 V778 M674.8 786 V791.5 M670.5 792 H679"/>
 </g>
 <path d="M708 784 H716.5" stroke="#444" stroke-width="1.3"/>
 <rect x="746" y="778" width="5.5" height="13.5" fill="#6A6A6A"/>
</svg>
<!-- watermark -->
<svg style="left:0;top:0" width="967" height="799">
 <defs>
  <radialGradient id="wg" cx="0.45" cy="0.4" r="0.6"><stop offset="0" stop-color="#FFFFFF" stop-opacity="0.9"/><stop offset="0.75" stop-color="#EEF2F4" stop-opacity="0.85"/><stop offset="1" stop-color="#C8D0D6" stop-opacity="0.8"/></radialGradient>
  <linearGradient id="wo" x1="0" y1="0" x2="0" y2="1"><stop offset="0" stop-color="#F08040"/><stop offset="1" stop-color="#D86030"/></linearGradient>
 </defs>
 <path d="M690 769.3 H962" stroke="#8A8A8A" stroke-width="1" opacity="0.55"/>
 <path d="M723 784.5 H960" stroke="#9A9A9A" stroke-width="1"/>
 <circle cx="794" cy="774.5" r="23.5" fill="url(#wg)" stroke="#D0D4D8" stroke-width="1"/>
 <path d="M777 760 C781 757 786 758 791 760 L789 773 C784 771 779 771 775 773 Z" fill="#E8602A"/>
 <path d="M793 760.5 C798 762.5 803 762 809 758 L806.5 771.5 C801 774.5 796 774.5 791 773 Z" fill="#70B040"/>
 <path d="M775 775 C779 773 784 773 789 775 L787 788 C782 786 777 786 773 788 Z" fill="#3A8EDA"/>
 <path d="M791 775 C796 777 801 777 806 773.5 L803.5 787 C798.5 790 794 790 789 788.5 Z" fill="#F8C02A"/>
 <text x="817" y="773" font-size="23" font-weight="bold" fill="url(#wo)" font-family="Liberation Sans" textLength="25" lengthAdjust="spacingAndGlyphs">W</text>
 <text x="842" y="773" font-size="19" font-weight="bold" fill="#E87030" font-family="Liberation Sans" textLength="16" lengthAdjust="spacingAndGlyphs">in</text>
 <text x="858" y="773" font-size="24" font-weight="bold" fill="#3A98D8" font-family="Liberation Sans" textLength="14" lengthAdjust="spacingAndGlyphs">7</text>
 <text x="875" y="772" font-size="21" font-weight="bold" fill="#6A6A6A" stroke="#6A6A6A" stroke-width="0.9" font-family="Liberation Sans" textLength="84" lengthAdjust="spacingAndGlyphs">系统之家</text>
 <text x="830" y="790.5" font-size="16" font-weight="bold" fill="#4A4A4A" font-family="Liberation Serif" textLength="120" lengthAdjust="spacingAndGlyphs" opacity="0.9">Www.Winwin7.com</text>
 <text x="861" y="790" font-size="13" fill="#333" font-family="Liberation Sans" opacity="0.8">42%</text>
 <path d="M854 784.5 H861 M857.5 781 V788" stroke="#444" stroke-width="1.2"/>
 <path d="M934 781 L938.5 776 L943 781 M934 788 L938.5 793 L943 788" fill="none" stroke="#555" stroke-width="1.3"/>
</svg>
<!-- window border -->
<div class="a" style="left:0;top:43px;width:967px;height:756px;border:1px solid #8A4A3E;border-top:0;border-radius:0 0 5px 5px;pointer-events:none"></div>
<div id="content"></div>
</body></html>
